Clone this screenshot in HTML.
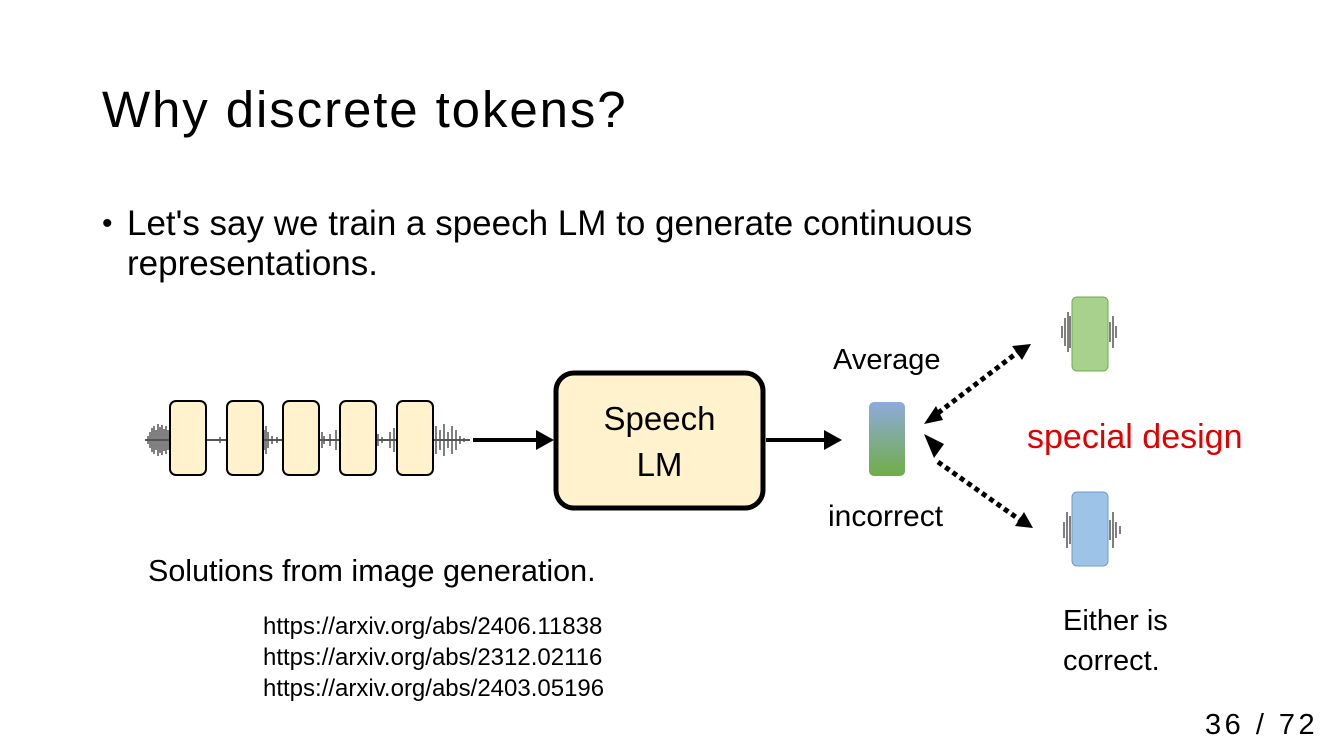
<!DOCTYPE html>
<html><head><meta charset="utf-8"><style>
body{margin:0;width:1334px;height:750px;background:#fff;position:relative;overflow:hidden;font-family:"Liberation Sans","DejaVu Sans",sans-serif;color:#000}
.t{position:absolute;white-space:nowrap}
</style></head><body>
<div class="t" style="left:102px;top:78px;font-size:51px;line-height:64px;font-weight:300;letter-spacing:1.9px">Why discrete tokens?</div>
<div class="t" style="left:102px;top:204px;font-size:30px;line-height:40px">•</div>
<div class="t" style="left:127px;top:204px;font-size:35px;line-height:40px;letter-spacing:0px">Let's say we train a speech LM to generate continuous<br>representations.</div>
<svg style="position:absolute;left:0;top:0" width="1334" height="750">
<defs>
<linearGradient id="g" x1="0" y1="0" x2="0" y2="1"><stop offset="0" stop-color="#8faadc"/><stop offset="1" stop-color="#70ad47"/></linearGradient>
</defs>
<g stroke="#555" stroke-width="1.5" fill="none">
<path d="M145 440 L470 440" stroke-width="2"/>
<path d="M148 436v8M150 432v16M152 428v24M154 426v28M156 430v20M158 424v32M160 427v26M162 425v30M164 429v22M166 426v28M168 430v20"/>
<path d="M206 437v6M220 437v6M264 430v20M266 426v28M268 432v16M272 436v8M277 437v6M322 432v16M324 436v8M330 434v12M336 430v20M378 434v12M382 437v6M390 432v16M394 428v24"/>
<path d="M436 426v28M440 430v20M444 424v32M448 432v16M452 426v28M456 430v20M460 436v8M464 438v4"/>
<path d="M1062 326v12M1065 318v28M1068 312v40M1070 316v32M1110 322v20M1113 316v32M1116 326v12"/>
<path d="M1064 522v16M1067 512v36M1070 516v28M1110 520v20M1113 512v36M1116 522v16M1120 526v8"/>
</g>
<g fill="#fff2cc" stroke="#000" stroke-width="2">
<rect x="170" y="401" width="36" height="74" rx="6"/>
<rect x="227" y="401" width="36" height="74" rx="6"/>
<rect x="283" y="401" width="36" height="74" rx="6"/>
<rect x="340" y="401" width="36" height="74" rx="6"/>
<rect x="397" y="401" width="36" height="74" rx="6"/>
<rect x="556" y="373" width="207" height="135" rx="18" stroke-width="5"/>
</g>
<path d="M473 440 L538 440" stroke="#000" stroke-width="4"/><path d="M536 430 L554 440 L536 450z"/>
<path d="M766 440 L826 440" stroke="#000" stroke-width="4"/><path d="M824 430 L842 440 L824 450z"/>
<rect x="869" y="402" width="36" height="74" rx="5" fill="url(#g)"/>
<rect x="1072" y="297" width="36" height="74" rx="5" fill="#a9d18e" stroke="#70ad47"/>
<rect x="1072" y="492" width="36" height="74" rx="5" fill="#9dc3e6" stroke="#6d9bd1"/>
<path d="M938 413 L1018 352" stroke="#000" stroke-width="5" stroke-dasharray="5 4"/>
<path d="M1031 344 L1012 346 L1022 360z"/><path d="M924 424 L936 406 L943 420z"/>
<path d="M938 462 L1020 520" stroke="#000" stroke-width="5" stroke-dasharray="5 4"/>
<path d="M1033 528 L1024 512 L1015 526z"/><path d="M924 434 L944 444 L934 458z"/>
</svg>
<div class="t" style="left:556px;top:396px;width:207px;text-align:center;font-size:33px;line-height:46px">Speech<br>LM</div>
<div class="t" style="left:833px;top:342px;font-size:29px;line-height:36px">Average</div>
<div class="t" style="left:828px;top:499px;font-size:30px;line-height:36px">incorrect</div>
<div class="t" style="left:1027px;top:417px;font-size:34px;line-height:40px;color:#e00000">special design</div>
<div class="t" style="left:148px;top:553px;font-size:30.5px;line-height:36px">Solutions from image generation.</div>
<div class="t" style="left:263px;top:611px;font-size:24px;line-height:31px">https://arxiv.org/abs/2406.11838<br>https://arxiv.org/abs/2312.02116<br>https://arxiv.org/abs/2403.05196</div>
<div class="t" style="left:1063px;top:601px;font-size:29px;line-height:40px">Either is<br>correct.</div>
<div class="t" style="left:1205px;top:706px;font-size:29px;line-height:38px;letter-spacing:3.5px">36 / 72</div>
</body></html>
